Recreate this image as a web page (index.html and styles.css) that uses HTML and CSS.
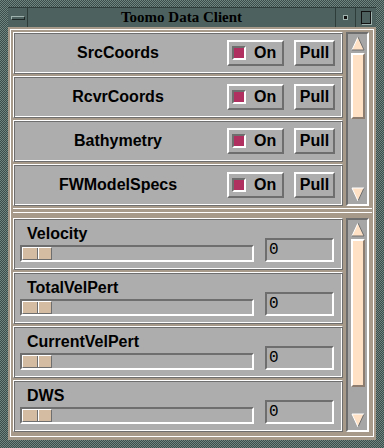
FILE: index.html
```html
<!DOCTYPE html>
<html lang="en">
<head>
    <meta charset="UTF-8">
    <title>Toomo Data Client</title>
    <link rel="stylesheet" href="styles.css">
</head>
<body>
    <div class="window">
        <!-- Titelleiste -->
        <div class="titlebar">
            <div class="tb-btn menu"><span class="menu-bar"></span></div>
            <div class="title">Toomo Data Client</div>
            <div class="tb-btn min"><span class="min-dot"></span></div>
            <div class="tb-btn max"><span class="max-box"></span></div>
        </div>

        <div class="client">
            <div class="main">
                <!-- obere Liste: Datensaetze -->
                <div class="pane top-pane">
                    <div class="rows">
                        <div class="row switch-row">
                            <div class="name">SrcCoords</div>
                            <div class="btn toggle"><span class="ind"></span>On</div>
                            <div class="btn pull">Pull</div>
                        </div>
                        <div class="row switch-row">
                            <div class="name">RcvrCoords</div>
                            <div class="btn toggle"><span class="ind"></span>On</div>
                            <div class="btn pull">Pull</div>
                        </div>
                        <div class="row switch-row">
                            <div class="name">Bathymetry</div>
                            <div class="btn toggle"><span class="ind"></span>On</div>
                            <div class="btn pull">Pull</div>
                        </div>
                        <div class="row switch-row">
                            <div class="name">FWModelSpecs</div>
                            <div class="btn toggle"><span class="ind"></span>On</div>
                            <div class="btn pull">Pull</div>
                        </div>
                    </div>
                    <div class="scrollbar">
                        <svg class="arrow" width="14" height="15" viewBox="0 0 14 15"><polygon points="7,1 13,14 1,14" fill="#ffe2c6"/><polyline points="1,14 7,1" stroke="#fff" fill="none"/><polyline points="7,1 13,14 1,14" stroke="#6e6e6e" fill="none"/></svg>
                        <div class="thumb top-thumb"></div>
                        <div class="trough-rest"></div>
                        <svg class="arrow" width="14" height="15" viewBox="0 0 14 15"><polygon points="1,1 13,1 7,14" fill="#ffe2c6"/><polyline points="7,14 13,1" stroke="#6e6e6e" fill="none"/><polyline points="7,14 1,1 13,1" stroke="#fff" fill="none"/></svg>
                    </div>
                </div>

                <div class="sash"><div class="sash-line"></div></div>

                <!-- untere Liste: Regler -->
                <div class="pane bottom-pane">
                    <div class="rows">
                        <div class="row slider-row">
                            <div class="label">Velocity</div>
                            <div class="slider"><div class="knob"></div></div>
                            <div class="field">0</div>
                        </div>
                        <div class="row slider-row">
                            <div class="label">TotalVelPert</div>
                            <div class="slider"><div class="knob"></div></div>
                            <div class="field">0</div>
                        </div>
                        <div class="row slider-row">
                            <div class="label">CurrentVelPert</div>
                            <div class="slider"><div class="knob"></div></div>
                            <div class="field">0</div>
                        </div>
                        <div class="row slider-row">
                            <div class="label">DWS</div>
                            <div class="slider"><div class="knob"></div></div>
                            <div class="field">0</div>
                        </div>
                    </div>
                    <div class="scrollbar">
                        <svg class="arrow" width="14" height="15" viewBox="0 0 14 15"><polygon points="7,1 13,14 1,14" fill="#ffe2c6"/><polyline points="1,14 7,1" stroke="#fff" fill="none"/><polyline points="7,1 13,14 1,14" stroke="#6e6e6e" fill="none"/></svg>
                        <div class="thumb bottom-thumb"></div>
                        <div class="trough-rest"></div>
                        <svg class="arrow" width="14" height="15" viewBox="0 0 14 15"><polygon points="1,1 13,1 7,14" fill="#ffe2c6"/><polyline points="7,14 13,1" stroke="#6e6e6e" fill="none"/><polyline points="7,14 1,1 13,1" stroke="#fff" fill="none"/></svg>
                    </div>
                </div>
            </div>
        </div>
    </div>
</body>
</html>
```

FILE: styles.css
```css
/* Motif Fenster */
body { margin: 0; background: #000; }
.window { width: 384px; height: 448px; box-sizing: border-box; padding: 0 8px 8px 8px; display: flex; flex-direction: column; background: repeating-conic-gradient(#3b4c4a 0% 25%, #6d847f 0% 50%) 0 0 / 2px 2px; }

.titlebar { height: 20px; margin-top: 7px; display: flex; background-color: #4d625f; border-top: 1px solid #2e3c3a; box-sizing: border-box; }
.tb-btn { display: flex; align-items: center; justify-content: center; height: 19px; }
.tb-btn.menu { width: 19px; border-right: 1px solid #2e3c3a; }
.tb-btn.min { width: 19px; border-left: 1px solid #2e3c3a; }
.tb-btn.max { width: 20px; border-left: 1px solid #2e3c3a; }
.menu-bar { width: 12px; height: 2px; border-top: 1px solid #9fb2ae; border-left: 1px solid #9fb2ae; border-bottom: 1px solid #1e2827; border-right: 1px solid #1e2827; }
.min-dot { width: 3px; height: 3px; background: #111; border: 1px solid #9fb2ae; }
.max-box { width: 8px; height: 11px; border: 1px solid #111; box-shadow: 1px 1px 0 #9fb2ae; }
.title { flex: 1; text-align: center; font-family: "Liberation Serif", serif; font-weight: bold; font-size: 15px; line-height: 19px; color: #000; }

.client { flex: 1; background-color: #a89a8b; padding: 2px 2px 3px 2px; display: flex; }
.main { flex: 1; display: flex; flex-direction: column; border: 1px solid #fff; padding: 2px 1px 2px 2px; }

.pane { display: flex; }
.top-pane { height: 174px; }
.bottom-pane { height: 214px; }
.rows { width: 330px; display: flex; flex-direction: column; gap: 2px; overflow: hidden; }

/* Zeilen mit geaetztem Rahmen */
.row { flex: none; background-color: #adadad; box-sizing: border-box; border: 1px solid; border-color: #fff #6e6e6e #6e6e6e #fff; box-shadow: inset 1px 1px 0 #6e6e6e, inset -1px -1px 0 #fff; font-family: "Liberation Sans", Arial, sans-serif; font-weight: bold; font-size: 16px; color: #000; }
.switch-row { height: 42px; display: flex; align-items: center; padding: 0 7px 0 2px; gap: 10px; }
.switch-row .name { flex: 1; text-align: center; padding-left: 3px; }
.btn { height: 26px; box-sizing: border-box; border: 2px solid; border-color: #fff #6e6e6e #6e6e6e #fff; display: flex; align-items: center; background-color: #adadad; }
.btn.toggle { width: 57px; padding-left: 3px; }
.btn.pull { width: 41px; justify-content: center; }
.ind { width: 14px; height: 14px; box-sizing: border-box; border: 2px solid; border-color: #6e6e6e #fff #fff #6e6e6e; background-color: #b0305f; margin-right: 8px; }

.slider-row { height: 52px; display: grid; grid-template-columns: 234px 69px; column-gap: 11px; padding: 6px 6px 0 6px; align-content: start; }
.slider-row .label { grid-column: 1; grid-row: 1; line-height: 18px; padding-left: 7px; }
.slider { grid-column: 1; grid-row: 2; margin-top: 2px; height: 17px; box-sizing: border-box; border: 2px solid; border-color: #6e6e6e #fff #fff #6e6e6e; }
.knob { width: 30px; height: 13px; box-sizing: border-box; background: linear-gradient(to right, transparent 14px, #6e6e6e 14px, #6e6e6e 15px, #fff 15px, #fff 16px, transparent 16px), #d4bca2; border: 1px solid; border-color: #fff #6e6e6e #6e6e6e #fff; }
.field { grid-column: 2; grid-row: 1 / 3; align-self: end; height: 24px; box-sizing: border-box; border: 2px solid; border-color: #6e6e6e #fff #fff #6e6e6e; font-family: "Liberation Mono", monospace; font-weight: normal; font-size: 16px; line-height: 20px; padding-left: 2px; }

/* Rollbalken */
.scrollbar { width: 23px; margin-left: 3px; box-sizing: border-box; border: 2px solid; border-color: #6e6e6e #fff #fff #6e6e6e; background-color: #a6a6a6; display: flex; flex-direction: column; align-items: center; padding: 2px 0; }
.arrow { display: block; flex: none; }
.thumb { width: 14px; flex: none; margin-top: 2px; box-sizing: border-box; background-color: #ffe2c6; border: 2px solid; border-color: #fff #8c7d70 #8c7d70 #fff; }
.top-thumb { height: 66px; }
.bottom-thumb { height: 148px; }
.trough-rest { flex: 1; }

.sash { height: 12px; flex: none; }
.sash-line { margin-top: 2px; height: 3px; border-top: 1px solid #fff; border-bottom: 1px solid #fff; }
```
